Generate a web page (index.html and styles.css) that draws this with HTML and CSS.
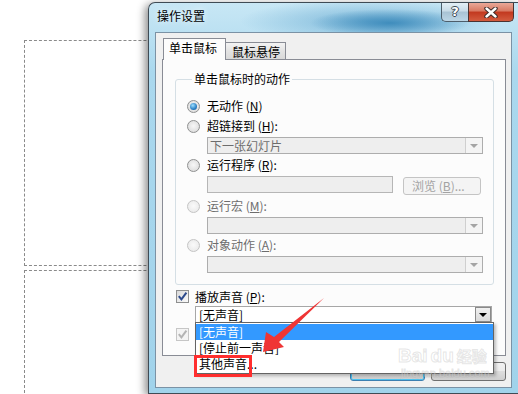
FILE: index.html
```html
<!DOCTYPE html>
<html>
  <head>
    <meta charset="utf-8">
    <link rel="stylesheet" href="styles.css">
  </head>
  <body>
    <div class="slide slide-first"></div>
    <div class="slide slide-second"></div>

    <div class="dialog">
      <div class="titlebar">
        <span class="title">操作设置</span>
        <div class="caption-buttons">
          <span class="btn-help">?</span>
          <span class="btn-close">
            <svg width="14" height="11" viewBox="0 0 14 11">
              <path d="M2.5 1.5 L11.5 9.5 M11.5 1.5 L2.5 9.5" stroke="#3b2a28" stroke-width="4.4" stroke-linecap="round" />
              <path d="M2.5 1.5 L11.5 9.5 M11.5 1.5 L2.5 9.5" stroke="#fff" stroke-width="2.4" stroke-linecap="round" />
            </svg>
          </span>
        </div>
      </div>

      <div class="client">
        <div class="tabs">
          <span class="tab tab-active">单击鼠标</span>
          <span class="tab">鼠标悬停</span>
        </div>

        <div class="tab-page">
          <fieldset class="group">
            <legend>单击鼠标时的动作</legend>
            <div class="option option-first"><span class="radio checked"></span><span>无动作 (<u>N</u>)</span></div>
            <div class="option"><span class="radio"></span><span>超链接到 (<u>H</u>):</span></div>
            <div class="select"><span class="select-text">下一张幻灯片</span><span class="select-arrow"></span></div>
            <div class="option"><span class="radio"></span><span>运行程序 (<u>R</u>):</span></div>
            <div class="field-row">
              <span class="textbox"></span>
              <span class="btn-browse">浏览 (<u>B</u>)...</span>
            </div>
            <div class="option option-off"><span class="radio"></span><span>运行宏 (<u>M</u>):</span></div>
            <div class="select"><span class="select-text"></span><span class="select-arrow"></span></div>
            <div class="option option-off"><span class="radio"></span><span>对象动作 (<u>A</u>):</span></div>
            <div class="select"><span class="select-text"></span><span class="select-arrow"></span></div>
          </fieldset>

          <div class="check-row">
            <span class="checkbox">
              <svg width="11" height="11" viewBox="0 0 11 11"><path d="M1.8 5.2 L4.4 8.4 L9.4 1.6" fill="none" stroke="#2c4a8c" stroke-width="2" /></svg>
            </span>
            <span>播放声音 (<u>P</u>):</span>
          </div>

          <div class="combo">
            <span class="combo-text">[无声音]</span>
            <span class="combo-arrow"></span>
            <ul class="droplist">
              <li class="selected">[无声音]</li>
              <li>[停止前一声音]</li>
              <li>其他声音...<span class="callout"></span></li>
            </ul>
          </div>

          <div class="check-row check-off">
            <span class="checkbox">
              <svg width="11" height="11" viewBox="0 0 11 11"><path d="M1.8 5.2 L4.4 8.4 L9.4 1.6" fill="none" stroke="#b4b4b4" stroke-width="2" /></svg>
            </span>
          </div>
        </div>

        <!-- OK / Cancel, their captions sit under the open list -->
        <div class="buttons">
          <span class="btn-dialog btn-default"></span>
          <span class="btn-dialog"></span>
        </div>
      </div>
    </div>

    <!-- annotation arrow drawn over the screenshot -->
    <svg class="arrow" width="518" height="394" viewBox="0 0 518 394">
      <polygon points="263,352 284,347 279,342 324,298 274,337 266,332" fill="#ef3535" />
    </svg>

    <div class="watermark">
      <div class="wm-logo">Bai<span class="wm-du">du</span><span class="wm-cn">经验</span></div>
      <div class="wm-url">jingyan.baidu.com</div>
    </div>
  </body>
</html>
```

FILE: styles.css
```css
body {
  margin: 0;
  width: 518px;
  height: 394px;
  overflow: hidden;
  position: relative;
  background-color: #fff;
  font-family: "Noto Sans CJK SC", "Noto Sans", sans-serif;
  font-size: 12px;
  line-height: 14px;
  color: #000;
}

u {
  text-decoration: underline;
}

.slide {
  position: absolute;
  left: 24px;
  width: 200px;
  border: 1px dashed #8a8a8a;
}

.slide-first {
  top: 40px;
  height: 224px;
}

.slide-second {
  top: 270px;
  height: 122px;
  border-bottom: 0;
}

/* window */

.dialog {
  position: absolute;
  left: 148px;
  top: 2px;
  width: 370px;
  height: 392px;
  box-sizing: border-box;
  border: 1px solid #3f4b55;
  border-right: 0;
  border-radius: 7px 0 0 0;
  background: linear-gradient(#c8e7f5, #aad8ee 70px, #a1d3eb);
  box-shadow: -3px 2px 8px rgba(0, 0, 0, 0.45);
  padding: 0 6px 5px 6px;
  display: flex;
  flex-direction: column;
}

.titlebar {
  height: 29px;
  display: flex;
  align-items: flex-start;
  padding-left: 2px;
  background:
    radial-gradient(80px 14px at 235px 20px, rgba(55, 135, 185, 0.9), rgba(55, 135, 185, 0)),
    radial-gradient(130px 22px at 215px 18px, rgba(80, 155, 200, 0.6), rgba(80, 155, 200, 0));
}

.title {
  margin-top: 6px;
  text-shadow: 0 0 6px rgba(255, 255, 255, 0.9);
}

.caption-buttons {
  margin-left: auto;
  margin-right: -2px;
  display: flex;
  height: 19px;
}

.btn-help {
  width: 27px;
  box-sizing: border-box;
  border: 1px solid #4d5e6b;
  border-top: 0;
  border-right: 0;
  border-radius: 0 0 0 5px;
  background: linear-gradient(#e4eff6, #c8dbe7 45%, #a8c2d3 50%, #bcd6e6);
  color: #fff;
  font-family: "DejaVu Sans", sans-serif;
  font-weight: bold;
  font-size: 13px;
  line-height: 18px;
  text-align: center;
  text-shadow: 1px 0 0 #3d4a55, -1px 0 0 #3d4a55, 0 1px 0 #3d4a55, 0 -1px 0 #3d4a55;
}

.btn-close {
  width: 46px;
  box-sizing: border-box;
  border: 1px solid #4a3331;
  border-top: 0;
  border-radius: 0 0 5px 0;
  background: linear-gradient(#eaa898, #d87962 45%, #c2381f 50%, #d35c3f);
  display: flex;
  align-items: center;
  justify-content: center;
}

.client {
  flex: 1;
  background-color: #f0f0f0;
  border: 1px solid #7b92a5;
  padding: 5px 5px 0 6px;
  display: flex;
  flex-direction: column;
}

/* tabs */

.tabs {
  height: 21px;
  display: flex;
  align-items: flex-end;
  padding-left: 1px;
}

.tab {
  height: 17px;
  width: 61px;
  box-sizing: border-box;
  border: 1px solid #898c95;
  border-bottom: 0;
  padding: 2px 0 0 6px;
  margin-left: -1px;
  background: linear-gradient(#f3f3f3, #e3e3e3 50%, #d9d9d9);
}

.tab-active {
  position: relative;
  z-index: 1;
  height: 22px;
  width: 63px;
  margin-left: 0;
  margin-bottom: -1px;
  padding: 2px 0 0 5px;
  background: #fcfcfc;
}

.tab-page {
  position: relative;
  height: 297px;
  box-sizing: border-box;
  border: 1px solid #898c95;
  background-color: #fcfcfc;
}

/* group box */

.group {
  margin: 12px 11px 0 12px;
  padding: 11px 0 11px 11px;
  border: 1px solid #d5dfe5;
  border-radius: 3px;
  min-width: 0;
}

.group legend {
  margin-left: 5px;
  padding: 0 2px;
}

.option {
  height: 18px;
  margin-top: 2px;
  display: flex;
  align-items: center;
  gap: 7px;
}

.option-first {
  margin-top: 0;
}

.option-off {
  color: #6d6d6d;
}

.radio {
  position: relative;
  flex: none;
  width: 13px;
  height: 13px;
  box-sizing: border-box;
  border: 1px solid #8f9090;
  border-radius: 50%;
  background: radial-gradient(circle at 50% 45%, #f7f7f7, #d6d6d6);
}

.radio.checked::after {
  content: "";
  position: absolute;
  left: 2px;
  top: 2px;
  width: 7px;
  height: 7px;
  border-radius: 50%;
  background: radial-gradient(circle at 40% 35%, #9ee0ff, #2a7fc4 60%, #17518a);
}

.option-off .radio {
  border-color: #c4c4c4;
  background: radial-gradient(circle at 50% 45%, #fafafa, #e6e6e6);
}

.select {
  margin: 2px 0 0 20px;
  width: 276px;
  height: 17px;
  box-sizing: border-box;
  border: 1px solid #adadad;
  background-color: #eeeeee;
  display: flex;
  align-items: center;
  color: #6d6d6d;
}

.select-text {
  flex: 1;
  padding-left: 2px;
}

.select-arrow {
  position: relative;
  width: 17px;
  height: 15px;
  box-sizing: border-box;
  border-left: 1px solid #cfcfcf;
  background-color: #f4f4f4;
}

.select-arrow::after {
  content: "";
  position: absolute;
  left: 4px;
  top: 6px;
  border-left: 4px solid transparent;
  border-right: 4px solid transparent;
  border-top: 4px solid #a4a4a4;
}

.field-row {
  display: flex;
  margin: 2px 0 1px 20px;
}

.textbox {
  width: 186px;
  height: 17px;
  box-sizing: border-box;
  border: 1px solid #b6b6b6;
  background-color: #eeeeee;
}

.btn-browse {
  width: 78px;
  height: 18px;
  margin: 1px 0 0 10px;
  box-sizing: border-box;
  border: 1px solid #c4c4c4;
  border-radius: 3px;
  background-color: #f4f4f4;
  color: #a3a3a3;
  padding: 1px 0 0 8px;
}

/* sound options */

.check-row {
  height: 17px;
  margin: 3px 0 0 13px;
  display: flex;
  align-items: center;
  gap: 6px;
}

.checkbox {
  flex: none;
  width: 13px;
  height: 13px;
  box-sizing: border-box;
  border: 1px solid #8e8f8f;
  background: linear-gradient(135deg, #d9d9d9, #fbfbfb);
  display: flex;
  align-items: center;
  justify-content: center;
}

.check-off {
  height: 13px;
  margin-top: 5px;
}

.check-off .checkbox {
  border-color: #c6c6c6;
  background: #f4f4f4;
}

.combo {
  position: relative;
  z-index: 2;
  margin: 1px 0 0 32px;
  width: 297px;
  height: 17px;
  box-sizing: border-box;
  border: 1px solid #a7a7a7;
  background-color: #fff;
  display: flex;
  align-items: center;
}

.combo-text {
  flex: 1;
  padding-left: 3px;
}

.combo-arrow {
  position: relative;
  width: 16px;
  height: 15px;
  box-sizing: border-box;
  border: 1px solid #8a8a8a;
  background: linear-gradient(#f0f0f0, #dadada);
}

.combo-arrow::after {
  content: "";
  position: absolute;
  left: 3px;
  top: 5px;
  border-left: 4px solid transparent;
  border-right: 4px solid transparent;
  border-top: 4px solid #000;
}

.droplist {
  position: absolute;
  left: -1px;
  top: 15px;
  width: 299px;
  box-sizing: border-box;
  margin: 0;
  padding: 1px 0;
  list-style: none;
  border: 1px solid #646464;
  background-color: #fff;
  box-shadow: 2px 2px 3px rgba(0, 0, 0, 0.25);
}

.droplist li {
  position: relative;
  height: 16px;
  line-height: 16px;
  padding-left: 3px;
}

.droplist .selected {
  background-color: #3399ff;
  color: #fff;
}

.callout {
  position: absolute;
  left: -2px;
  top: -1px;
  width: 58px;
  height: 22px;
  box-sizing: border-box;
  border: 3px solid #ff2e2e;
}

.buttons {
  display: flex;
  justify-content: flex-end;
  gap: 6px;
  margin-top: 6px;
}

.btn-dialog {
  width: 75px;
  height: 19px;
  box-sizing: border-box;
  border: 1px solid #707070;
  border-radius: 3px;
  background: linear-gradient(#f2f2f2, #ebebeb 50%, #dddddd 50%, #cfcfcf);
}

.btn-default {
  border-color: #3c7fb1;
  box-shadow: inset 0 0 0 1px #4cc3f0;
}

/* overlays */

.arrow {
  position: absolute;
  left: 0;
  top: 0;
  z-index: 10;
  pointer-events: none;
}

.watermark {
  position: absolute;
  left: 398px;
  top: 346px;
  z-index: 9;
  font-family: "Liberation Sans", sans-serif;
  color: rgba(255, 255, 255, 0.3);
  -webkit-text-stroke: 1px rgba(170, 170, 170, 0.3);
}

.wm-logo {
  font-size: 19px;
  line-height: 20px;
  font-weight: bold;
}

.wm-du {
  margin-left: 3px;
}

.wm-cn {
  margin-left: 3px;
  font-family: "Noto Sans CJK SC", sans-serif;
  font-size: 15px;
}

.wm-url {
  margin: 2px 0 0 3px;
  font-size: 11px;
  line-height: 11px;
}
```
